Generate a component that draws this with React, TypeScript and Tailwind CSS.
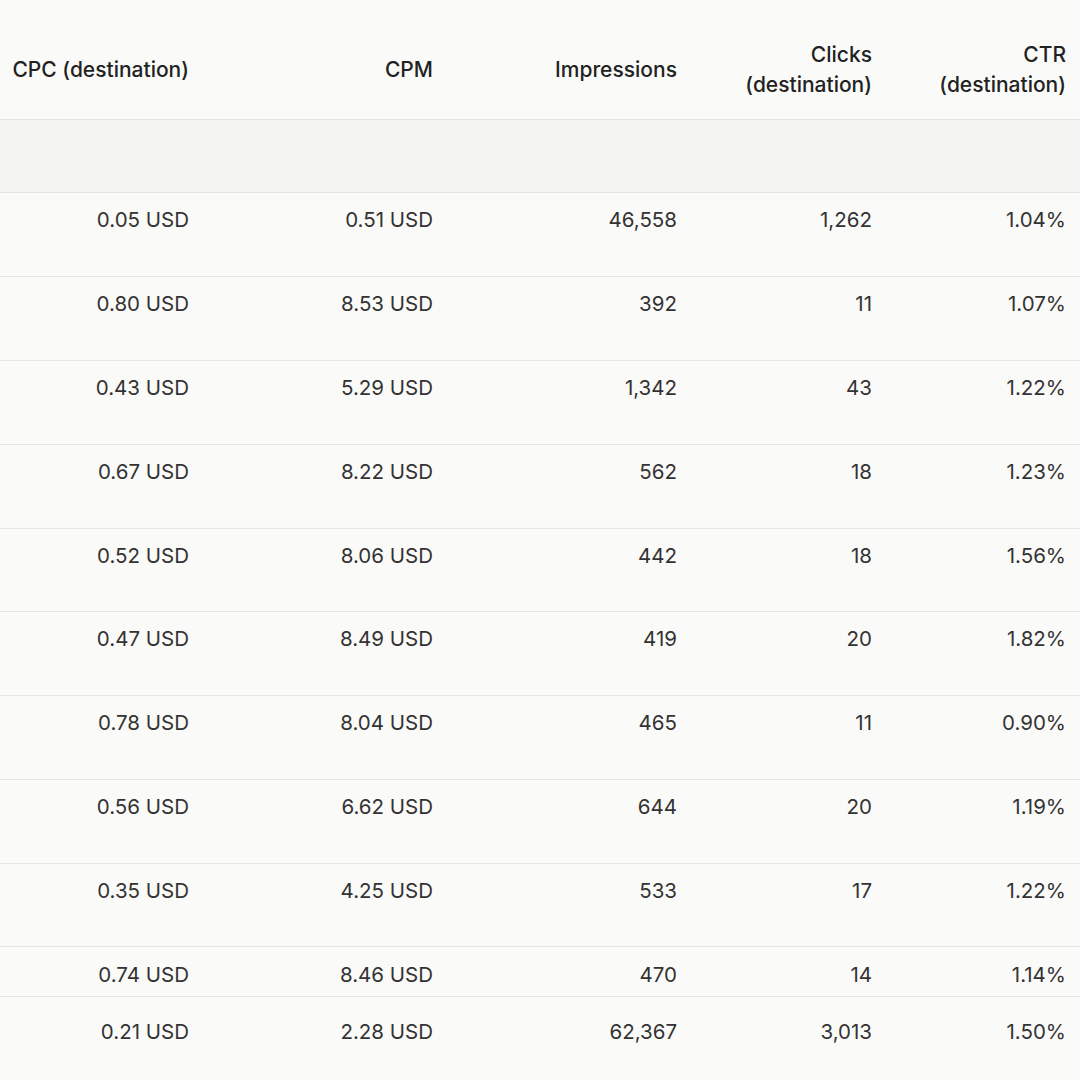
import React from "react";

const rows = [
  { cpc: "0.05 USD", cpm: "0.51 USD", imp: "46,558", clicks: "1,262", ctr: "1.04%", h: "h-[84px]", pt: "pt-[13px]" },
  { cpc: "0.80 USD", cpm: "8.53 USD", imp: "392", clicks: "11", ctr: "1.07%", h: "h-[84px]", pt: "pt-[13px]" },
  { cpc: "0.43 USD", cpm: "5.29 USD", imp: "1,342", clicks: "43", ctr: "1.22%", h: "h-[84px]", pt: "pt-[13px]" },
  { cpc: "0.67 USD", cpm: "8.22 USD", imp: "562", clicks: "18", ctr: "1.23%", h: "h-[84px]", pt: "pt-[13px]" },
  { cpc: "0.52 USD", cpm: "8.06 USD", imp: "442", clicks: "18", ctr: "1.56%", h: "h-[83px]", pt: "pt-[13px]" },
  { cpc: "0.47 USD", cpm: "8.49 USD", imp: "419", clicks: "20", ctr: "1.82%", h: "h-[84px]", pt: "pt-[13px]" },
  { cpc: "0.78 USD", cpm: "8.04 USD", imp: "465", clicks: "11", ctr: "0.90%", h: "h-[84px]", pt: "pt-[13px]" },
  { cpc: "0.56 USD", cpm: "6.62 USD", imp: "644", clicks: "20", ctr: "1.19%", h: "h-[84px]", pt: "pt-[13px]" },
  { cpc: "0.35 USD", cpm: "4.25 USD", imp: "533", clicks: "17", ctr: "1.22%", h: "h-[83px]", pt: "pt-[13px]" },
  { cpc: "0.74 USD", cpm: "8.46 USD", imp: "470", clicks: "14", ctr: "1.14%", h: "h-[50px]", pt: "pt-[14px]" },
  { cpc: "0.21 USD", cpm: "2.28 USD", imp: "62,367", clicks: "3,013", ctr: "1.50%", h: "h-[84px]", pt: "pt-[21px]" },
];

const cols = "grid grid-cols-[203px_244px_244px_195px_194px]";

const App = () => {
  return (
    <div
      className="w-[1080px] h-[1080px] overflow-hidden bg-[#fafaf8] text-[#333333]"
      style={{ fontFamily: "Inter, 'Noto Sans', sans-serif" }}
    >
      <div className={`${cols} h-[120px] pt-[20px] border-b border-[#e4e4e2] font-medium text-[#222222] text-[21px] leading-[30px]`}>
        <div className="flex items-center justify-end pr-[14px] text-right">CPC (destination)</div>
        <div className="flex items-center justify-end pr-[14px] text-right">CPM</div>
        <div className="flex items-center justify-end pr-[14px] text-right">Impressions</div>
        <div className="flex items-center justify-end pr-[14px] text-right">
          Clicks
          <br />
          (destination)
        </div>
        <div className="flex items-center justify-end pr-[14px] text-right">
          CTR
          <br />
          (destination)
        </div>
      </div>

      <div className="h-[73px] bg-[#f3f3f1] border-b border-[#e4e4e2]" />

      {rows.map((r, i) => (
        <div
          key={i}
          className={`${cols} ${r.h} ${r.pt} ${i < rows.length - 1 ? "border-b border-[#e6e6e4]" : ""} text-[20.5px] leading-[28px]`}
        >
          <div className="text-right pr-[14px]">{r.cpc}</div>
          <div className="text-right pr-[14px]">{r.cpm}</div>
          <div className="text-right pr-[14px]">{r.imp}</div>
          <div className="text-right pr-[14px]">{r.clicks}</div>
          <div className="text-right pr-[14px]">{r.ctr}</div>
        </div>
      ))}
    </div>
  );
};

export default App;
